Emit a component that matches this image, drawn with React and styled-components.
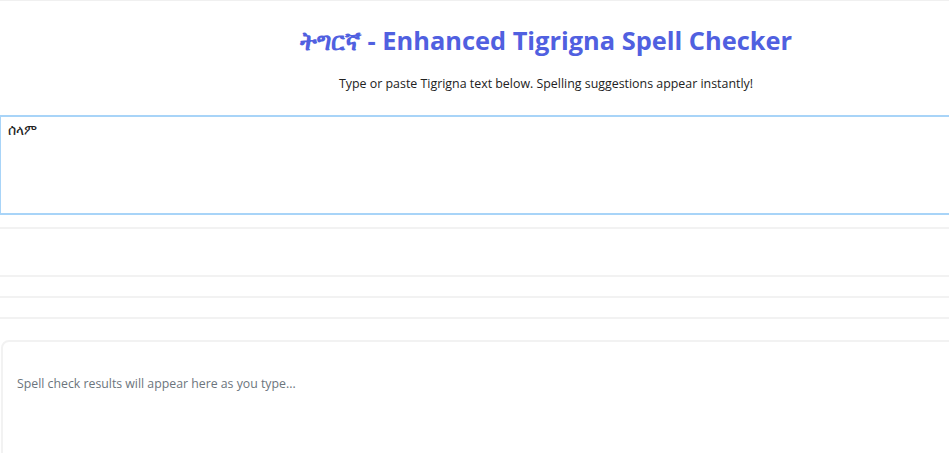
import React from "react";
import styled, { createGlobalStyle } from "styled-components";

const Global = createGlobalStyle`
  html, body { margin: 0; padding: 0; background: #fff; overflow: hidden; }
  body { font-family: "Open Sans", "Noto Sans", "DejaVu Sans", sans-serif; }
`;

const Page = styled.div`
  width: 1092px;
  border-top: 1px solid #f0f0f0;
  box-sizing: border-box;
`;

const Header = styled.header`
  text-align: center;
  padding-top: 22px;
`;

const Title = styled.h1`
  margin: 0;
  font-size: 25.4px;
  line-height: 34px;
  font-weight: 700;
  color: #5060e0;
  font-family: "Open Sans", "Noto Sans", "DejaVu Sans", sans-serif;
`;

const Subtitle = styled.p`
  margin: 18px 0 0;
  font-size: 12.4px;
  line-height: 18px;
  color: #222;
`;

const Editor = styled.textarea`
  display: block;
  margin: 22px 0 0 0;
  width: 100%;
  height: 100px;
  box-sizing: border-box;
  border: 2px solid #a8d4f8;
  border-left-width: 1px;
  padding: 3px 7px;
  font-family: "Open Sans", "Noto Sans", "DejaVu Sans", sans-serif;
  font-size: 14px;
  color: #222;
  resize: none;
  outline: none;
`;

const Bar = styled.div`
  box-sizing: border-box;
  height: ${(p) => p.$h}px;
  margin-top: ${(p) => p.$mt}px;
  border-top: 2px solid #f2f2f2;
  border-bottom: ${(p) => (p.$bottom ? "2px solid #f2f2f2" : "none")};
`;

const Results = styled.div`
  margin-top: 2px;
  margin-left: 1px;
  height: 140px;
  box-sizing: border-box;
  border: 2px solid #f2f2f2;
  border-radius: 8px;
  padding: 33px 14px;
`;

const Placeholder = styled.p`
  margin: 0;
  font-size: 12.3px;
  line-height: 18px;
  color: #6c757d;
`;

export default function App() {
  return (
    <>
      <Global />
      <Page>
        <Header>
          <Title>ትግርኛ - Enhanced Tigrigna Spell Checker</Title>
          <Subtitle>Type or paste Tigrigna text below. Spelling suggestions appear instantly!</Subtitle>
        </Header>
        <Editor defaultValue="ሰላም" />
        <Bar $mt={12} $h={50} $bottom />
        <Bar $mt={19} $h={21} />
        <Bar $mt={0} $h={21} />
        <Results>
          <Placeholder>Spell check results will appear here as you type...</Placeholder>
        </Results>
      </Page>
    </>
  );
}
